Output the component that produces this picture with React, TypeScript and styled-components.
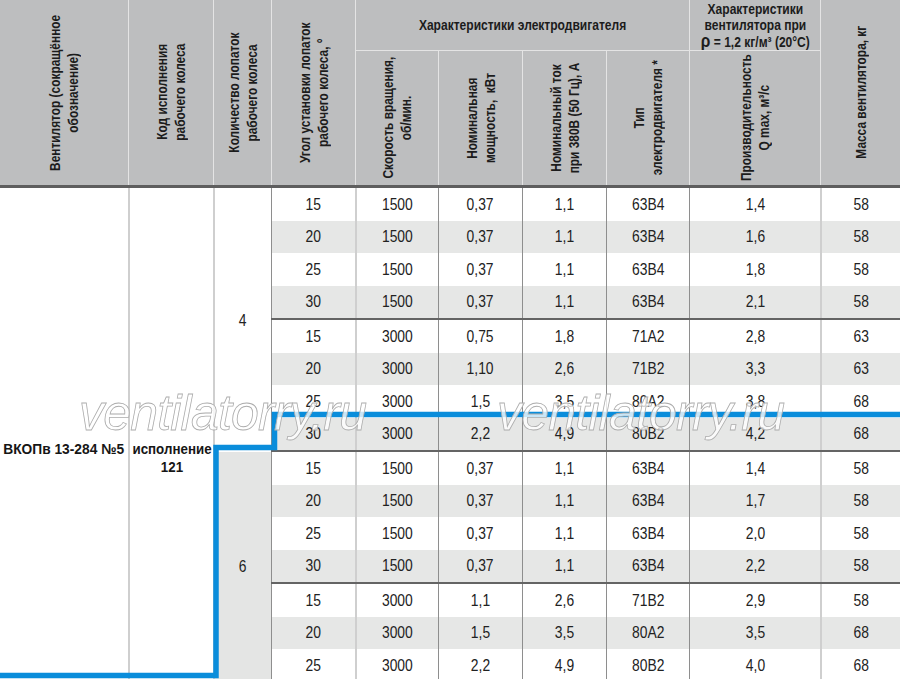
import React from 'react';
import styled, { createGlobalStyle } from 'styled-components';

const SANS = `"Liberation Sans", Arial, sans-serif`;

const Global = createGlobalStyle`
  *, *::before, *::after { box-sizing: border-box; }
  html, body { margin: 0; padding: 0; background: #fff; }
  body { width: 900px; height: 679px; overflow: hidden; font-family: ${SANS}; }
`;

const COLS = '128px 85px 58px 84px 83px 84px 84px 83px 131px 80px';
const DATA_COLS = '84px 83px 84px 84px 83px 131px 80px';
const TONES: Array<'dark' | 'light'> = ['dark', 'light', 'dark', 'dark', 'dark', 'dark', 'light'];

const Page = styled.div`
  position: relative;
  width: 900px;
`;

const Header = styled.div`
  display: grid;
  grid-template-columns: ${COLS};
  grid-template-rows: 51px 134px;
  background: #bdbebf;
  border-bottom: 3px solid #5e5e5e;
`;

const HCell = styled.div<{ $c: string; $r: string; $line?: boolean; $bottom?: boolean }>`
  grid-column: ${(p) => p.$c};
  grid-row: ${(p) => p.$r};
  border-left: ${(p) => (p.$line ? '1px solid #e4e4e4' : 'none')};
  border-bottom: ${(p) => (p.$bottom ? '1px solid #e4e4e4' : 'none')};
  display: flex;
  align-items: center;
  justify-content: center;
  text-align: center;
  font-weight: 700;
  font-size: 14px;
  line-height: 16px;
  color: #1c1c1c;
  overflow: hidden;
`;

/* condensed look: compress along the reading direction */
const Rot = styled.span`
  writing-mode: vertical-rl;
  transform: rotate(180deg) scaleY(0.85);
  white-space: nowrap;
  line-height: 18px;
`;

const Flat = styled.span`
  display: inline-block;
  transform: scaleX(0.86);
  white-space: nowrap;
`;

const Rho = styled.span`
  font-size: 18px;
  font-weight: 700;
`;

const Body = styled.div`
  display: flex;
`;

const SpanCell = styled.div<{ $w: number; $line?: boolean; $offset: number }>`
  width: ${(p) => p.$w}px;
  flex: none;
  border-left: ${(p) => (p.$line ? '2px solid #cfcfcf' : 'none')};
  display: flex;
  align-items: center;
  justify-content: center;
  text-align: center;
  padding-top: ${(p) => p.$offset}px;
  font-weight: 700;
  font-size: 14.5px;
  line-height: 18px;
  color: #161616;
`;

const BoldText = styled.span<{ $squeeze: number }>`
  display: inline-block;
  transform: scaleX(${(p) => p.$squeeze});
  white-space: nowrap;
`;

const Blades = styled.div`
  display: flex;
  flex-direction: column;
  flex: 1;
`;

const BladeGroup = styled.div`
  display: flex;
`;

const BladeCell = styled.div<{ $shade: boolean }>`
  width: 58px;
  flex: none;
  border-left: 2px solid #cfcfcf;
  background: ${(p) => (p.$shade ? '#e4e5e4' : '#fff')};
  display: flex;
  align-items: center;
  justify-content: center;
  font-size: 16.5px;
  color: #222;
`;

const SpeedGroups = styled.div`
  display: flex;
  flex-direction: column;
  flex: 1;
`;

const SpeedGroup = styled.div<{ $sep: boolean }>`
  border-bottom: ${(p) => (p.$sep ? '2px solid #646464' : 'none')};
`;

const Row = styled.div<{ $alt: boolean }>`
  display: grid;
  grid-template-columns: ${DATA_COLS};
  height: 32.5px;
  background: ${(p) => (p.$alt ? '#e6e7e6' : '#fff')};
`;

const Cell = styled.div<{ $tone: 'dark' | 'light' }>`
  border-left: ${(p) => (p.$tone === 'dark' ? '1px solid #8e8e8e' : '2px solid #cfcfcf')};
  display: flex;
  align-items: center;
  justify-content: center;
  font-size: 16.5px;
  color: #222;
`;

const Num = styled.span`
  display: inline-block;
  transform: scaleX(0.84);
  white-space: nowrap;
`;

const Marker = styled.svg`
  position: absolute;
  left: 0;
  top: 0;
  width: 900px;
  height: 679px;
  pointer-events: none;
`;

const Watermark = styled.div<{ $x: number }>`
  position: absolute;
  left: ${(p) => p.$x}px;
  top: 388px;
  font-style: italic;
  font-size: 50px;
  line-height: 1;
  letter-spacing: -0.8px;
  white-space: nowrap;
  color: rgba(255, 255, 255, 0.78);
  -webkit-text-stroke: 0.8px #acacac;
  pointer-events: none;
`;

type Line = [string, string, string, string, string, string, string];

const groups: { blades: string; shade: boolean; speeds: Line[][] }[] = [
  {
    blades: '4',
    shade: false,
    speeds: [
      [
        ['15', '1500', '0,37', '1,1', '63B4', '1,4', '58'],
        ['20', '1500', '0,37', '1,1', '63B4', '1,6', '58'],
        ['25', '1500', '0,37', '1,1', '63B4', '1,8', '58'],
        ['30', '1500', '0,37', '1,1', '63B4', '2,1', '58'],
      ],
      [
        ['15', '3000', '0,75', '1,8', '71A2', '2,8', '63'],
        ['20', '3000', '1,10', '2,6', '71B2', '3,3', '63'],
        ['25', '3000', '1,5', '3,5', '80A2', '3,8', '68'],
        ['30', '3000', '2,2', '4,9', '80B2', '4,2', '68'],
      ],
    ],
  },
  {
    blades: '6',
    shade: true,
    speeds: [
      [
        ['15', '1500', '0,37', '1,1', '63B4', '1,4', '58'],
        ['20', '1500', '0,37', '1,1', '63B4', '1,7', '58'],
        ['25', '1500', '0,37', '1,1', '63B4', '2,0', '58'],
        ['30', '1500', '0,37', '1,1', '63B4', '2,2', '58'],
      ],
      [
        ['15', '3000', '1,1', '2,6', '71B2', '2,9', '58'],
        ['20', '3000', '1,5', '3,5', '80A2', '3,5', '68'],
        ['25', '3000', '2,2', '4,9', '80B2', '4,0', '68'],
      ],
    ],
  },
];

export default function App() {
  return (
    <Page>
      <Global />
      <Header>
        <HCell $c="1" $r="1 / 3">
          <Rot>
            Вентилятор (сокращённое
            <br />
            обозначение)
          </Rot>
        </HCell>
        <HCell $c="2" $r="1 / 3" $line>
          <Rot>
            Код исполнения
            <br />
            рабочего колеса
          </Rot>
        </HCell>
        <HCell $c="3" $r="1 / 3" $line>
          <Rot>
            Количество лопаток
            <br />
            рабочего колеса
          </Rot>
        </HCell>
        <HCell $c="4" $r="1 / 3" $line>
          <Rot>
            Угол установки лопаток
            <br />
            рабочего колеса, °
          </Rot>
        </HCell>
        <HCell $c="5 / 9" $r="1" $line $bottom>
          <Flat>Характеристики электродвигателя</Flat>
        </HCell>
        <HCell $c="9" $r="1" $line $bottom>
          <Flat>
            Характеристики
            <br />
            вентилятора при
            <br />
            <Rho>ρ</Rho> = 1,2 кг/м³ (20°С)
          </Flat>
        </HCell>
        <HCell $c="10" $r="1 / 3" $line>
          <Rot>Масса вентилятора, кг</Rot>
        </HCell>
        <HCell $c="5" $r="2" $line>
          <Rot>
            Скорость вращения,
            <br />
            об/мин.
          </Rot>
        </HCell>
        <HCell $c="6" $r="2" $line>
          <Rot>
            Номинальная
            <br />
            мощность,&nbsp; кВт
          </Rot>
        </HCell>
        <HCell $c="7" $r="2" $line>
          <Rot>
            Номинальный ток
            <br />
            при 380В (50 Гц), А
          </Rot>
        </HCell>
        <HCell $c="8" $r="2" $line>
          <Rot>
            Тип
            <br />
            электродвигателя *
          </Rot>
        </HCell>
        <HCell $c="9" $r="2" $line>
          <Rot>
            Производительность
            <br />
            Q max, м³/с
          </Rot>
        </HCell>
      </Header>
      <Body>
        <SpanCell $w={128} $offset={29}>
          <BoldText $squeeze={0.95}>ВКОПв 13-284 №5</BoldText>
        </SpanCell>
        <SpanCell $w={85} $line $offset={47}>
          <BoldText $squeeze={0.92}>
            исполнение
            <br />
            121
          </BoldText>
        </SpanCell>
        <Blades>
          {groups.map((g, gi) => (
            <BladeGroup key={gi}>
              <BladeCell $shade={g.shade}>
                <Num>{g.blades}</Num>
              </BladeCell>
              <SpeedGroups>
                {g.speeds.map((rows, si) => (
                  <SpeedGroup key={si} $sep={!(gi === groups.length - 1 && si === g.speeds.length - 1)}>
                    {rows.map((r, ri) => (
                      <Row key={ri} $alt={ri % 2 === 1}>
                        {r.map((v, ci) => (
                          <Cell key={ci} $tone={TONES[ci]}>
                            <Num>{v}</Num>
                          </Cell>
                        ))}
                      </Row>
                    ))}
                  </SpeedGroup>
                ))}
              </SpeedGroups>
            </BladeGroup>
          ))}
        </Blades>
      </Body>
      <Marker viewBox="0 0 900 679">
        <polyline
          points="900,414.5 274.5,414.5 274.5,447.5 216,447.5 216,675.5 0,675.5"
          fill="none"
          stroke="#0a8ddb"
          strokeWidth="5.5"
          strokeLinejoin="miter"
        />
      </Marker>
      <Watermark $x={79}>ventilatorry.ru</Watermark>
      <Watermark $x={497}>ventilatorry.ru</Watermark>
    </Page>
  );
}
